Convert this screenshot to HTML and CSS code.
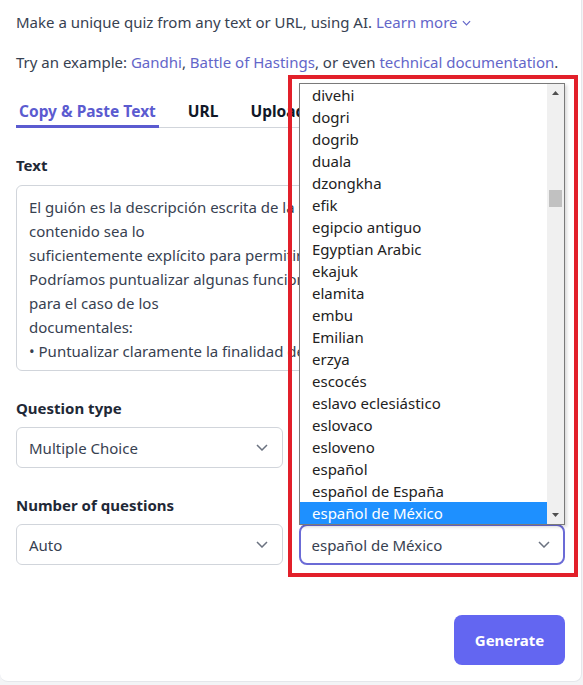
FILE: index.html
```html
<!DOCTYPE html>
<html lang="es">
<head>
<meta charset="utf-8">
<title>Quiz generator</title>
<link rel="stylesheet" href="styles.css">
</head>
<body>
<div class="card">
  <p class="intro">Make a unique quiz from any text or URL, using AI. <a class="link" href="#">Learn more<svg class="tiny-chev" viewBox="0 0 10 6" width="9" height="6"><path d="M1 1l4 4 4-4" fill="none" stroke="currentColor" stroke-width="1.3"/></svg></a></p>
  <p class="examples">Try an example: <a class="link" href="#">Gandhi</a>, <a class="link" href="#">Battle of Hastings</a>, or even <a class="link" href="#">technical documentation</a>.</p>

  <div class="tabs">
    <span class="tab active">Copy &amp; Paste Text</span>
    <span class="tab">URL</span>
    <span class="tab">Upload</span>
  </div>

  <div class="label">Text</div>
  <div class="textarea">El guión es la descripción escrita de la secuencia de un
contenido sea lo
suficientemente explícito para permitir su realización.
Podríamos puntualizar algunas funciones del guión
para el caso de los
documentales:
• Puntualizar claramente la finalidad del programa
didáctica.</div>

  <div class="grid">
    <div class="field">
      <div class="label">Question type</div>
      <div class="select">Multiple Choice<svg class="chev" viewBox="0 0 12 7" width="12" height="7"><path d="M1 1l5 5 5-5" fill="none" stroke="currentColor" stroke-width="1.5"/></svg></div>
    </div>
    <div class="field">
      <div class="label">Difficulty</div>
      <div class="select">Medium<svg class="chev" viewBox="0 0 12 7" width="12" height="7"><path d="M1 1l5 5 5-5" fill="none" stroke="currentColor" stroke-width="1.5"/></svg></div>
    </div>
    <div class="field">
      <div class="label">Number of questions</div>
      <div class="select">Auto<svg class="chev" viewBox="0 0 12 7" width="12" height="7"><path d="M1 1l5 5 5-5" fill="none" stroke="currentColor" stroke-width="1.5"/></svg></div>
    </div>
    <div class="field">
      <div class="label">Language</div>
      <div class="select focused">español de México<svg class="chev" viewBox="0 0 12 7" width="12" height="7"><path d="M1 1l5 5 5-5" fill="none" stroke="currentColor" stroke-width="1.5"/></svg></div>
    </div>
  </div>

  <div class="actions">
    <button class="generate">Generate</button>
  </div>

  <div class="dropdown">
    <ul class="options">
      <li>divehi</li>
      <li>dogri</li>
      <li>dogrib</li>
      <li>duala</li>
      <li>dzongkha</li>
      <li>efik</li>
      <li>egipcio antiguo</li>
      <li>Egyptian Arabic</li>
      <li>ekajuk</li>
      <li>elamita</li>
      <li>embu</li>
      <li>Emilian</li>
      <li>erzya</li>
      <li>escocés</li>
      <li>eslavo eclesiástico</li>
      <li>eslovaco</li>
      <li>esloveno</li>
      <li>español</li>
      <li>español de España</li>
      <li class="selected">español de México</li>
    </ul>
    <div class="scrollbar">
      <svg class="arrow" viewBox="0 0 7 4" width="7" height="4"><path d="M0 4L3.5 0 7 4z" fill="#505050"/></svg>
      <div class="track"><div class="thumb"></div></div>
      <svg class="arrow" viewBox="0 0 7 4" width="7" height="4"><path d="M0 0L3.5 4 7 0z" fill="#505050"/></svg>
    </div>
  </div>
  <div class="highlight-box"></div>
</div>
</body>
</html>
```

FILE: styles.css
```css
* { box-sizing: border-box; }
html, body { margin: 0; padding: 0; }
body {
  background: #f3f4f6;
  font-family: "Noto Sans", "Open Sans", sans-serif;
  color: #374151;
  font-size: 15px;
}
.card {
  position: relative;
  width: 582px;
  height: 682px;
  background: #fff;
  border-right: 1px solid #e5e7eb;
  border-bottom: 1px solid #e5e7eb;
  border-bottom-right-radius: 8px;
  border-bottom-left-radius: 8px;
  padding: 0 16px;
  overflow: hidden;
}
p { margin: 0; line-height: 20px; }
.intro { padding-top: 12px; }
.examples { margin-top: 20px; }
.link { color: #6366c9; text-decoration: none; }
.tiny-chev { margin-left: 4px; vertical-align: 2px; }

.tabs {
  display: flex;
  margin-top: 25px;
  border-bottom: 1px solid #d1d5db;
  height: 31px;
}
.tab {
  font-weight: 700;
  font-size: 15.5px;
  color: #111827;
  padding: 4px 3px 0;
  margin-right: 26px;
  line-height: 20px;
  height: 31px;
}
.tab.active {
  color: #5b5bd0;
  border-bottom: 3px solid #5b5bd0;
}

.label {
  font-weight: 700;
  color: #1f2937;
  line-height: 20px;
  margin-top: 27px;
}
.textarea {
  margin-top: 10px;
  height: 186px;
  border: 1px solid #d1d5db;
  border-radius: 6px;
  padding: 9px 12px 0;
  white-space: pre;
  overflow: hidden;
  line-height: 24px;
  color: #374151;
}

.grid {
  display: grid;
  grid-template-columns: 1fr 1fr;
  column-gap: 16px;
}
.select {
  margin-top: 9px;
  height: 41px;
  border: 1px solid #d1d5db;
  border-radius: 6px;
  padding: 0 12px;
  display: flex;
  align-items: center;
  justify-content: space-between;
  color: #374151;
}
.select.focused {
  border: 2px solid #6b6bd6;
  border-radius: 8px;
  padding: 0 11px;
}
.chev { color: #6b7280; margin-right: 2px; }

.actions {
  display: flex;
  justify-content: flex-end;
  margin-top: 49px;
}
.generate {
  width: 111px;
  height: 50px;
  margin-top: 1px;
  border: none;
  border-radius: 8px;
  background: #6366f1;
  color: #fff;
  font-family: inherit;
  font-size: 15px;
  font-weight: 700;
}

.dropdown {
  position: absolute;
  left: 299px;
  top: 83px;
  width: 266px;
  height: 442px;
  border: 1px solid #7a7a7a;
  background: #fff;
  display: flex;
  box-shadow: 2px 2px 3px rgba(0,0,0,0.15);
}
.options {
  list-style: none;
  margin: 0;
  padding: 0;
  flex: 1;
}
.options li {
  height: 22px;
  line-height: 22px;
  padding-left: 12px;
  color: #222;
  white-space: nowrap;
}
.options li.selected {
  background: #1e90ff;
  color: #fff;
}
.scrollbar {
  width: 17px;
  background: #f0f0f0;
  display: flex;
  flex-direction: column;
  align-items: center;
}
.scrollbar .arrow { margin: 7px 0; }
.track { flex: 1; width: 100%; padding-top: 88px; }
.thumb { width: 13px; height: 17px; margin: 0 auto; background: #c1c1c1; }

.highlight-box {
  position: absolute;
  left: 288px;
  top: 75px;
  width: 290px;
  height: 502px;
  border: 4px solid #e2202a;
  pointer-events: none;
}
```
